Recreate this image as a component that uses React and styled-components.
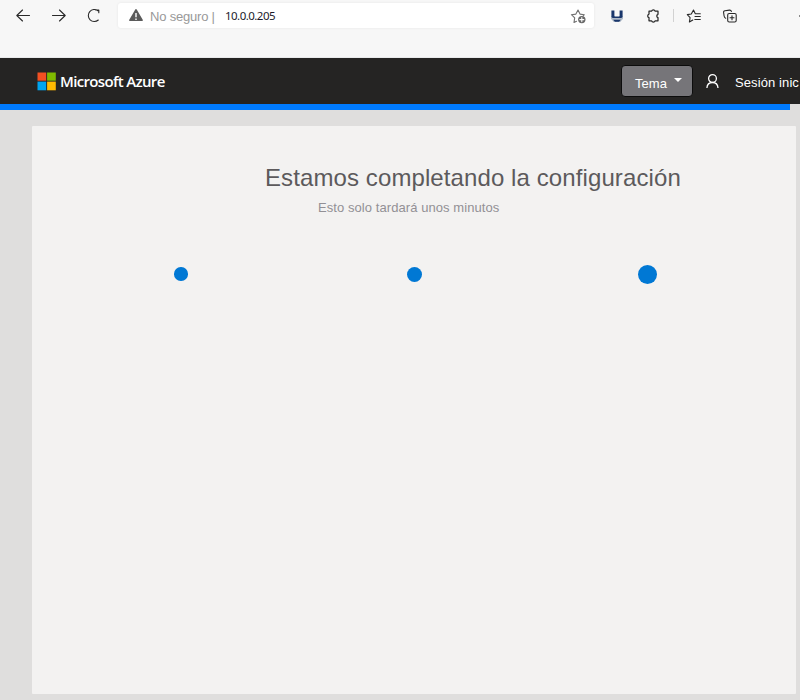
import React from "react";
import styled, { createGlobalStyle } from "styled-components";

const GlobalStyle = createGlobalStyle`
  * { box-sizing: border-box; }
  body {
    margin: 0;
    overflow: hidden;
    background: #dfdedd;
    font-family: "Liberation Sans", Arial, sans-serif;
  }
`;

const Page = styled.div`
  width: 800px;
  height: 700px;
  overflow: hidden;
  display: flex;
  flex-direction: column;
  background: #dfdedd;
`;

const BrowserBar = styled.header`
  height: 58px;
  flex: none;
  display: flex;
  align-items: flex-start;
  padding: 3px 0 0 14px;
  background: #f7f7f7;
  border-bottom: 1px solid #e9eaeb;
`;

const ToolIcon = styled.span`
  width: 18px;
  height: 25px;
  flex: none;
  display: flex;
  align-items: center;
  justify-content: center;
  margin-right: ${(p) => p.$gap}px;
`;

const AddressBar = styled.div`
  width: 476px;
  height: 25px;
  flex: none;
  display: flex;
  align-items: center;
  padding: 0 7px 0 9px;
  margin-right: 14px;
  background: #fff;
  border-radius: 3px;
  box-shadow: 0 0 3px rgba(0, 0, 0, 0.07);
`;

const Security = styled.span`
  width: 75px;
  font-size: 13px;
  line-height: 25px;
  letter-spacing: -0.2px;
  color: #999;
  white-space: pre;
  padding-top: 2px;
`;

const Address = styled.span`
  flex: 1;
  font-family: "Noto Sans", "Open Sans", sans-serif;
  font-size: 11.5px;
  line-height: 24px;
  letter-spacing: -0.53px;
  color: #1b1b2b;
`;

const Separator = styled.i`
  width: 1px;
  height: 13px;
  margin: 6px 11px 0 0;
  background: #d2d2d2;
`;

const Overflow = styled.i`
  width: 1px;
  height: 2px;
  margin: 12px 0 0 auto;
  background: #8a8a8a;
`;

const PortalBar = styled.nav`
  height: 46px;
  flex: none;
  display: flex;
  align-items: center;
  padding-left: 37px;
  background: #252423;
  color: #fff;
`;

const Brand = styled.span`
  width: 106px;
  margin: -1px 0 0 4px;
  font-family: "Open Sans", "Noto Sans", sans-serif;
  font-size: 15px;
  font-weight: 600;
  line-height: 20px;
  letter-spacing: -0.66px;
  white-space: nowrap;
`;

const ThemeButton = styled.button`
  width: 72px;
  height: 32px;
  margin: 0 11px 0 auto;
  padding: 4px 10px 0 13px;
  display: flex;
  align-items: center;
  justify-content: space-between;
  border: 1px solid #0c0c0c;
  border-radius: 4px;
  background: #767579;
  color: #fff;
  font-family: inherit;
  font-size: 13px;
  letter-spacing: 0.05px;
`;

const Caret = styled.i`
  width: 0;
  height: 0;
  margin-bottom: 6px;
  border: 4px solid transparent;
  border-top-color: #fff;
  border-bottom: 0;
`;

const Account = styled.span`
  width: 65px;
  margin-left: 15px;
  padding-top: 3px;
  white-space: nowrap;
  font-size: 13px;
  line-height: 20px;
  letter-spacing: 0.1px;
`;

const Progress = styled.div`
  width: 790px;
  height: 6px;
  flex: none;
  background: #007bff;
`;

const Panel = styled.main`
  width: 764px;
  height: 568px;
  flex: none;
  margin: 16px 0 0 32px;
  padding-top: 36px;
  display: flex;
  flex-direction: column;
  background: #f3f2f1;
  border-radius: 1px;
`;

const Title = styled.h1`
  margin: 0 0 0 233px;
  font-size: 24px;
  font-weight: 400;
  line-height: 32px;
  letter-spacing: 0.1px;
  color: #5c5a5c;
  white-space: nowrap;
`;

const Subtitle = styled.p`
  margin: 4px 0 0 286px;
  font-size: 13px;
  line-height: 20px;
  letter-spacing: 0.07px;
  color: #929095;
  white-space: nowrap;
`;

const DotRow = styled.div`
  width: 699px;
  height: 20px;
  margin: 46px 0 0 32.5px;
  display: grid;
  grid-template-columns: repeat(3, 1fr);
  place-items: center;
`;

const Dot = styled.span`
  width: ${(p) => p.$size}px;
  height: ${(p) => p.$size}px;
  border-radius: 50%;
  background: #0078d4;
`;

const lines = { fill: "none", stroke: "#292929", strokeWidth: 1.1, strokeLinecap: "round", strokeLinejoin: "round" };

const BackIcon = () => (
  <svg width="18" height="18" viewBox="0 0 18 18" {...lines}><path d="M8.5 3 2.8 8.5l5.7 5.5M3 8.5h12.5" /></svg>
);
const ForwardIcon = () => (
  <svg width="18" height="18" viewBox="0 0 18 18" {...lines}><path d="m9.5 3 5.7 5.5-5.7 5.5M15 8.5H2.5" /></svg>
);
const ReloadIcon = () => (
  <svg width="18" height="18" viewBox="0 0 18 18" {...lines}><path d="M13.3 13A6 6 0 1 1 12.9 3.7M10.5 3h3.3v2.8" /></svg>
);
const WarningIcon = () => (
  <svg width="18" height="18" viewBox="0 0 18 18">
    <path d="M9 3 15 13.2H3Z" fill="#5b5b5b" stroke="#5b5b5b" strokeWidth="1.7" strokeLinejoin="round" />
    <path d="M9 6v4.2M9 11.5v1.4" stroke="#fff" strokeWidth="1.4" />
  </svg>
);
const AddFavoriteIcon = () => (
  <svg width="18" height="18" viewBox="0 0 18 18" {...lines} stroke="#707070">
    <path d="M7.5 14.2 5 15.4l.7-4.5-3.3-3.2 4.5-.6L9 3l2 4.1 4.3.6-1.1 1.2" />
    <circle cx="12.8" cy="12.6" r="3.7" fill="#686868" stroke="none" />
    <path d="M12.8 10.6v4M10.8 12.6h4" stroke="#fff" />
  </svg>
);
const ShieldIcon = () => (
  <svg width="18" height="18" viewBox="0 0 18 18">
    <path d="M3 9h12v2.8L12.2 15H5.8L3 11.8Z" fill="#aeb9c7" />
    <path d="M3.4 3.5h3v5.2c0 .7.4 1.1 1.2 1.1h2.8c.8 0 1.2-.4 1.2-1.1V3.5h3V9c0 1.5-.8 2-2.3 2H5.7C4.2 11 3.4 10.5 3.4 9Z" fill="#19366b" />
    <path d="M5.2 12.7h7.6L11 14.7H7Z" fill="#19366b" />
  </svg>
);
const ExtensionIcon = () => (
  <svg width="18" height="18" viewBox="0 0 18 18" {...lines} strokeWidth="1.25">
    <path d="M7.5 4.2a2 2 0 0 1 3.7 0H14v3.1a1.8 1.8 0 0 0 0 3.4v3.1h-2.8a2 2 0 0 1-3.7 0H5v-3.1a1.9 1.9 0 0 1 0-3.6V4.2Z" />
  </svg>
);
const FavoritesIcon = () => (
  <svg width="18" height="18" viewBox="0 0 18 18" {...lines}>
    <path d="m7.8 13-3.4 2 .7-4.4-2.8-3 4-.6L8.5 3l1.8 3.7h5M10 9.5h5.3M9.8 12.5h5.5" />
  </svg>
);
const CollectionsIcon = () => (
  <svg width="18" height="18" viewBox="0 0 18 18" {...lines}>
    <rect x="6.7" y="6.5" width="8.5" height="8.5" rx="1.5" />
    <path d="M11 8.7v4M9 10.7h4M4.7 11.3C3.5 10.8 3.3 10 3.1 9L2.6 5.5c-.2-1 .3-1.6 1.3-1.8l4.5-.6c1-.1 1.8.3 2 1.4" />
  </svg>
);
const MicrosoftLogo = () => (
  <svg width="19" height="19" viewBox="0 0 19 19">
    <path fill="#f25022" d="M.5.5h8.7v8.2H.5z" />
    <path fill="#7fba00" d="M10.1.5h8.7v8.2h-8.7z" />
    <path fill="#00a4ef" d="M.5 9.6h8.7v8.7H.5z" />
    <path fill="#ffb900" d="M10.1 9.6h8.7v8.7h-8.7z" />
  </svg>
);
const PersonIcon = () => (
  <svg width="16" height="18" viewBox="0 0 16 18" fill="none" stroke="#fff" strokeWidth="1.3">
    <circle cx="8.5" cy="6.5" r="3.9" /><path d="M2.9 16c.2-3.3 2.5-5.5 5.6-5.5s5.3 2.2 5.5 5.5" />
  </svg>
);

const dotSizes = [13.5, 15, 19];

export default function App() {
  return (
    <Page>
      <GlobalStyle />
      <BrowserBar>
        <ToolIcon $gap={18}><BackIcon /></ToolIcon>
        <ToolIcon $gap={17}><ForwardIcon /></ToolIcon>
        <ToolIcon $gap={15}><ReloadIcon /></ToolIcon>
        <AddressBar>
          <ToolIcon $gap={5}><WarningIcon /></ToolIcon>
          <Security>No seguro |</Security>
          <Address>10.0.0.205</Address>
          <ToolIcon $gap={0}><AddFavoriteIcon /></ToolIcon>
        </AddressBar>
        <ToolIcon $gap={18}><ShieldIcon /></ToolIcon>
        <ToolIcon $gap={11}><ExtensionIcon /></ToolIcon>
        <Separator />
        <ToolIcon $gap={18}><FavoritesIcon /></ToolIcon>
        <ToolIcon $gap={0}><CollectionsIcon /></ToolIcon>
        <Overflow />
      </BrowserBar>
      <PortalBar>
        <MicrosoftLogo />
        <Brand>Microsoft Azure</Brand>
        <ThemeButton>Tema<Caret /></ThemeButton>
        <PersonIcon />
        <Account>Sesión inic</Account>
      </PortalBar>
      <Progress />
      <Panel>
        <Title>Estamos completando la configuración</Title>
        <Subtitle>Esto solo tardará unos minutos</Subtitle>
        <DotRow>{dotSizes.map((size) => <Dot key={size} $size={size} />)}</DotRow>
      </Panel>
    </Page>
  );
}
